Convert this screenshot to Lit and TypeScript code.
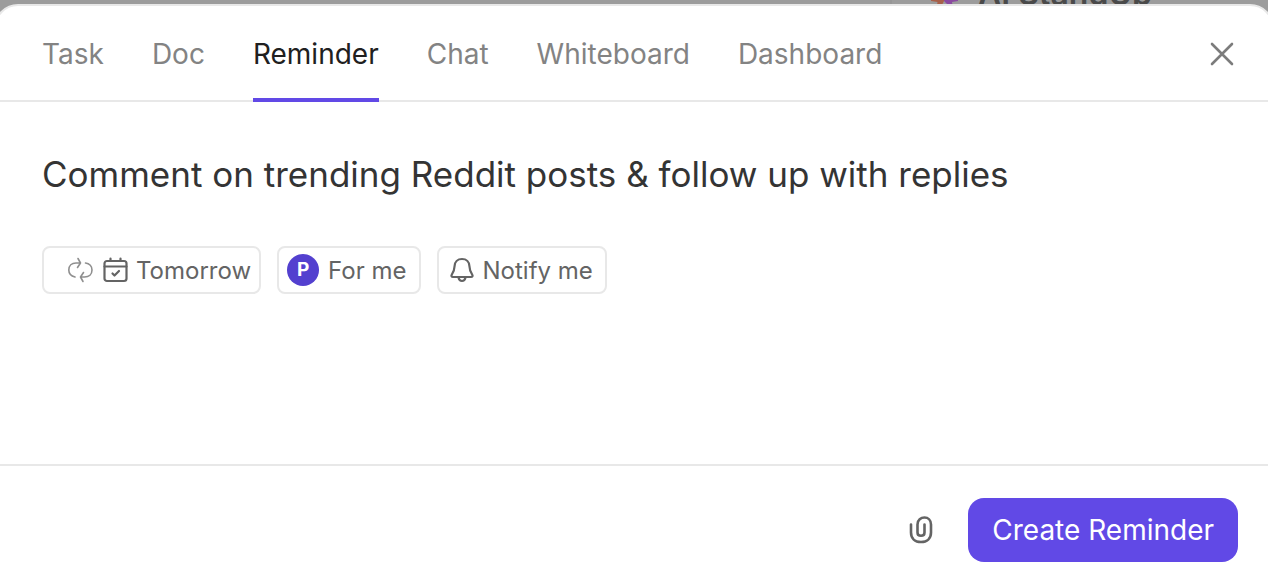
import { LitElement, html, css } from "lit";
import { customElement, state } from "lit/decorators.js";

@customElement("app-root")
export class AppRoot extends LitElement {
  @state() private active = "Reminder";

  private tabs = ["Task", "Doc", "Reminder", "Chat", "Whiteboard", "Dashboard"];

  static styles = css`
    :host {
      display: block;
      font-family: Inter, "Liberation Sans", sans-serif;
      color: #646464;
    }
    * {
      box-sizing: border-box;
    }
    button,
    input {
      font: inherit;
      color: inherit;
      margin: 0;
    }
    button {
      cursor: pointer;
    }
    svg {
      display: block;
      flex: none;
    }
    .page {
      position: relative;
      display: flex;
      flex-direction: column;
      height: 100vh;
      padding-top: 4px;
      overflow: hidden;
      background: #9c9c9c;
    }
    .behind {
      position: absolute;
      top: -26px;
      right: 0;
      width: 378px;
      height: 60px;
      padding-left: 38px;
      display: flex;
      align-items: flex-start;
      gap: 18px;
      border-left: 2px solid #969696;
      font-size: 32px;
      font-weight: 600;
      line-height: 40px;
      color: #4a4a4a;
    }
    .modal {
      position: relative;
      flex: 1 0 auto;
      display: flex;
      flex-direction: column;
      margin: 0 -6px -12px;
      background: #fff;
      border: 2px solid #e8e8e8;
      border-radius: 24px;
    }
    .head {
      display: flex;
      align-items: stretch;
      justify-content: space-between;
      height: 96px;
      padding: 0 38px 0 46px;
      border-bottom: 2px solid #e8e8e8;
    }
    .tabs {
      display: flex;
      gap: 48px;
    }
    .tab {
      margin-bottom: -2px;
      padding: 4px 0 0;
      border: 0;
      border-bottom: 4px solid transparent;
      background: none;
      font-size: 28px;
      line-height: 32px;
      color: #838383;
    }
    .tab.on {
      color: #202020;
      border-bottom-color: #6149e6;
    }
    .icon {
      display: flex;
      align-items: center;
      padding: 0;
      border: 0;
      background: none;
    }
    .close {
      padding-top: 2px;
    }
    .body {
      flex: 1;
      padding: 48px 46px;
    }
    .title {
      display: block;
      width: 100%;
      height: 48px;
      padding: 0;
      border: 0;
      outline: 0;
      background: none;
      font-size: 35px;
      color: #343434;
    }
    .chips {
      display: flex;
      gap: 16px;
      margin-top: 48px;
    }
    .chip {
      display: flex;
      align-items: center;
      gap: 8px;
      height: 48px;
      padding: 0 8px;
      border: 2px solid #e8e8e8;
      border-radius: 8px;
      background: #fff;
      font-size: 24px;
      line-height: 32px;
    }
    .label {
      padding-top: 2px;
    }
    .chip.date {
      padding-left: 24px;
    }
    .chip.person {
      padding-right: 12px;
      gap: 9px;
    }
    .chip.notify {
      padding: 0 12px 0 10px;
    }
    .avatar {
      width: 32px;
      border-radius: 50%;
      background: #5340cf;
      color: #fff;
      font-size: 19px;
      font-weight: 700;
      text-align: center;
    }
    .foot {
      display: flex;
      justify-content: flex-end;
      align-items: center;
      gap: 32px;
      padding: 32px 34px 34px;
      border-top: 2px solid #e8e8e8;
    }
    .create {
      height: 64px;
      padding: 0 24px;
      border: 0;
      border-radius: 16px;
      background: #6149e6;
      color: #fff;
      font-size: 28px;
    }
  `;

  private close = html`<svg width="24" height="24" viewBox="0 0 24 24" fill="none" stroke="#7c7c7c" stroke-width="2.6" stroke-linecap="round">
    <path d="M2 2l20 20M22 2L2 22" />
  </svg>`;

  private recur = html`<svg width="26" height="26" viewBox="0 0 26 26" fill="none" stroke="#8f8f8f" stroke-width="1.6" stroke-linecap="round" stroke-linejoin="round">
    <path d="M7 20C3 19 0.800 16.500 0.800 13C0.800 8.800 3.800 6 8 6H12.500M10 1.500L12.500 6L9.500 10.500" />
    <path d="M17.500 6C21.500 6.500 24 9.500 24 13C24 17.200 21 20 16.500 20H12.500M15.500 15.500L12.500 20L15 24.500" />
  </svg>`;

  private calendar = html`<svg width="26" height="26" viewBox="0 0 26 26" fill="none" stroke="#646464" stroke-width="2.2" stroke-linecap="round" stroke-linejoin="round">
    <rect x="2.500" y="4" width="22" height="20" rx="2.500" />
    <path d="M2.500 9.500H24.500M8.500 1.500V4M18.500 1.500V4M10.500 16.500L12.500 18.500L17 14" />
  </svg>`;

  private bell = html`<svg width="26" height="26" viewBox="0 0 26 26" fill="none" stroke="#646464" stroke-width="2.2" stroke-linecap="round" stroke-linejoin="round">
    <path d="M13 2C8.500 2 5.800 5 5.600 9C5.400 13.500 4.800 15 2.800 17.600C2 18.800 2.500 20 4 20H22C23.500 20 24 18.800 23.200 17.600C21.200 15 20.600 13.500 20.400 9C20.200 5 17.500 2 13 2Z" />
    <path d="M9.500 20.500C10 22.800 11.300 24 13 24S16 22.800 16.500 20.500" />
  </svg>`;

  private clip = html`<svg width="32" height="32" viewBox="0 0 32 32" fill="none" stroke="#646464" stroke-width="2.600" stroke-linecap="round">
    <path d="M7 10.500V18.500C7 24.500 11 28 17 28S27 24.500 27 18.500V10.500C27 6 24 3.500 20.500 3.500S13.500 6 13.500 10.500V18.500C13.500 20.600 15 21.800 17 21.800S20.500 20.600 20.500 18.500V10.500" />
  </svg>`;

  private spark = html`<svg width="30" height="34" viewBox="0 0 30 34">
    <path d="M2 0H14V27L12 31H7L7.500 28L1 27Z" fill="#a8604a" />
    <path d="M14 0H28V27L22 28L22.500 31H18L14 27Z" fill="#8a4aa0" />
  </svg>`;

  render() {
    return html`
      <div class="page">
        <div class="behind">${this.spark}<span>AI StandUp</span></div>
        <section class="modal" role="dialog" aria-label="Create">
          <header class="head">
            <nav class="tabs" role="tablist">
              ${this.tabs.map(
                (t) => html`<button
                  class="tab ${t === this.active ? "on" : ""}"
                  role="tab"
                  aria-selected=${t === this.active ? "true" : "false"}
                  @click=${() => (this.active = t)}
                >${t}</button>`
              )}
            </nav>
            <button class="icon close" aria-label="Close">${this.close}</button>
          </header>
          <div class="body">
            <input
              class="title"
              aria-label="Reminder name"
              .value=${"Comment on trending Reddit posts & follow up with replies"}
            />
            <div class="chips">
              <button class="chip date">${this.recur}${this.calendar}<span class="label">Tomorrow</span></button>
              <button class="chip person"><span class="avatar">P</span><span class="label">For me</span></button>
              <button class="chip notify">${this.bell}<span class="label">Notify me</span></button>
            </div>
          </div>
          <footer class="foot">
            <button class="icon" aria-label="Attach file">${this.clip}</button>
            <button class="create">Create Reminder</button>
          </footer>
        </section>
      </div>
    `;
  }
}
